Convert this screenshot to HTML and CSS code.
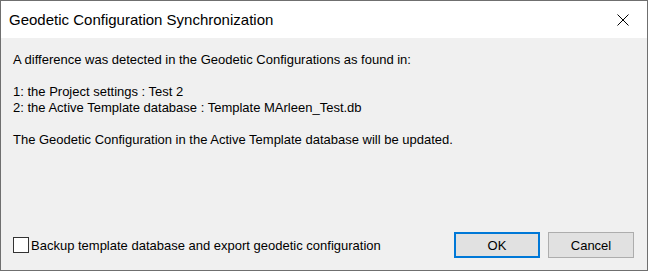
FILE: index.html
```html
<!doctype html>
<html lang="en">
  <head>
    <meta charset="utf-8">
    <title>Geodetic Configuration Synchronization</title>
    <link rel="stylesheet" href="styles.css">
  </head>
  <body>
    <div class="window">
      <div class="titlebar">
        <span class="title">Geodetic Configuration Synchronization</span>
        <span class="close">
          <svg width="12" height="12" viewBox="0 0 12 12">
            <path d="M0.5 0.5 L11.5 11.5 M11.5 0.5 L0.5 11.5" stroke="#000" stroke-width="1" fill="none"/>
          </svg>
        </span>
      </div>
      <div class="content">
        <div class="message">
          <p>A difference was detected in the Geodetic Configurations as found in:</p>
          <p>1: the Project settings : Test 2<br>2: the Active Template database : Template MArleen_Test.db</p>
          <p>The Geodetic Configuration in the Active Template database will be updated.</p>
        </div>
        <div class="footer">
          <label class="check">
            <span class="box"></span>
            <span>Backup template database and export geodetic configuration</span>
          </label>
          <div class="buttons">
            <button class="btn default">OK</button>
            <button class="btn">Cancel</button>
          </div>
        </div>
      </div>
    </div>
  </body>
</html>
```

FILE: styles.css
```css
html, body {
    margin: 0;
    padding: 0;
}

body {
    font-family: "Liberation Sans", Arial, sans-serif;
    font-size: 13px;
    color: #000;
}

.window {
    width: 648px;
    height: 271px;
    box-sizing: border-box;
    border: 1px solid #6f6f6f;
    display: flex;
    flex-direction: column;
}

.titlebar {
    height: 37px;
    background-color: #fff;
    display: flex;
    align-items: center;
    padding-left: 8px;
    flex-shrink: 0;
}

.title {
    flex: 1;
    font-size: 15px;
}

.close {
    width: 46px;
    display: flex;
    justify-content: center;
    margin-right: 1px;
}

.close svg {
    display: block;
}

.content {
    flex: 1;
    background-color: #f0f0f0;
    display: flex;
    flex-direction: column;
    padding: 14px 13px 12px 12px;
}

.message {
    flex: 1;
}

.message p {
    margin: 0 0 16px 0;
    line-height: 16px;
}

.footer {
    display: flex;
    align-items: center;
}

.check {
    flex: 1;
    display: flex;
    align-items: center;
    gap: 2px;
}

.box {
    width: 16px;
    height: 16px;
    box-sizing: border-box;
    border: 1px solid #333;
    background-color: #fff;
}

.buttons {
    display: flex;
    gap: 8px;
}

.btn {
    width: 86px;
    height: 26px;
    box-sizing: border-box;
    border: 1px solid #adadad;
    background-color: #e1e1e1;
    font-family: inherit;
    font-size: 13px;
    padding: 0;
}

.btn.default {
    border: 2px solid #0078d7;
}
```
